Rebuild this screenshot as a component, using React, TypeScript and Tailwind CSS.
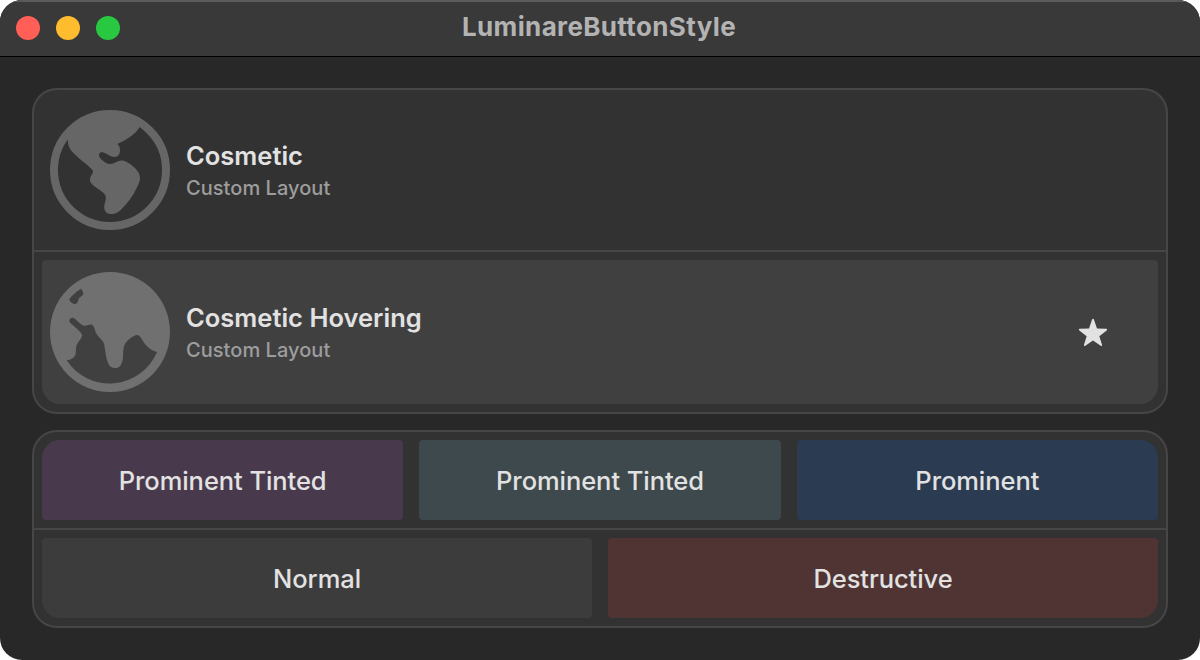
import type { ReactNode } from "react";

function GlobeAmericas() {
  return (
    <svg viewBox="30 30 360 360" className="size-[120px] shrink-0 text-[#666666]" fill="currentColor">
      <circle cx="210" cy="210" r="168" fill="none" stroke="currentColor" strokeWidth="24" />
      <path d="M83 118C84 134 87 145 98 157C114 175 137 190 154 206C160 212 160 215 157 221C150 232 147 240 154 250C163 262 186 272 195 284C203 296 190 313 193 326C196 338 205 342 215 342C233 342 243 329 257 314C274 295 288 272 298 246C302 235 300 224 294 215C285 202 269 189 253 183C235 177 227 192 210 192C198 192 179 176 177 167C175 159 182 155 192 158C202 161 212 171 222 171C234 171 240 162 240 152C240 143 238 136 232 132C256 122 287 104 298 82L312 70L210 32L105 68L70 120Z" />
    </svg>
  );
}

function GlobeAfrica() {
  return (
    <svg viewBox="30 30 360 360" className="size-[120px] shrink-0 text-[#707070]" fill="currentColor">
      <path
        fillRule="evenodd"
        d="M210 30A180 180 0 1 1 210 390A180 180 0 1 1 210 30ZM80 295C93 293 104 287 107 275C109 266 106 254 112 245C117 237 127 227 126 219C125 210 101 193 91 183C86 177 88 168 97 167C107 167 119 188 132 191C141 193 151 185 157 189C164 194 164 207 170 217C176 227 188 234 192 245C196 260 196 282 204 302C208 313 215 318 226 318C239 318 245 308 248 293C251 280 247 262 254 248C261 235 280 220 291 219C303 219 305 235 317 248C326 259 339 267 351 270A154 154 0 0 1 80 295ZM123 80C126 83 130 90 130 95C128 101 119 105 116 110C115 117 112 125 105 126C97 126 89 119 88 111C95 101 107 90 123 80Z"
      />
    </svg>
  );
}

function Star() {
  return (
    <svg viewBox="0 0 90 86" className="h-[29px] w-[30px]" fill="#e2e2e2">
      <path d="M45 2Q47 2 48 5L57 31L85 32Q90 33 86 37L64 54L72 80Q73 85 68 83L45 67L22 83Q17 85 18 80L26 54L4 37Q0 33 5 32L33 31L42 5Q43 2 45 2Z" />
    </svg>
  );
}

function Group({ children }: { children: ReactNode }) {
  return (
    <section className="divide-y-2 divide-[#464646] rounded-[25px] border-2 border-[#464646] bg-[#323232]">
      {children}
    </section>
  );
}

function Label({ title }: { title: string }) {
  return (
    <div className="flex flex-col pt-[3px]">
      <span className="text-[25.5px] leading-8 font-semibold tracking-[0.01px] text-[#e2e2e2]">{title}</span>
      <span className="text-[20px] leading-8 font-medium tracking-[0.05px] text-[#9d9d9d]">Custom Layout</span>
    </div>
  );
}

function Action({ className, children }: { className: string; children: ReactNode }) {
  return (
    <button
      className={`flex h-20 flex-1 items-center justify-center rounded-[4px] pt-[3px] text-[25.5px] font-[450] tracking-[-0.07px] text-[#e2e2e2] ${className}`}
    >
      {children}
    </button>
  );
}

export default function App() {
  return (
    <div className="h-[660px] w-[1200px] bg-white font-['Inter',sans-serif]">
      <main className="h-full overflow-hidden rounded-[22px] bg-[#282828]">
        <header className="grid h-[57px] grid-cols-[1fr_auto_1fr] items-center border-t-2 border-b border-t-[#5b5b5b] border-b-black bg-[#393939]">
          <div className="flex gap-4 pb-[2px] pl-4">
            <i className="size-6 rounded-full bg-[#ff5f57]" />
            <i className="size-6 rounded-full bg-[#febc2e]" />
            <i className="size-6 rounded-full bg-[#28c840]" />
          </div>
          <h1 className="pr-[2px] pb-[6px] text-[26px] font-bold tracking-[0.36px] text-[#b3b3b3]">LuminareButtonStyle</h1>
        </header>
        <div className="flex flex-col gap-4 px-8 pt-[31px]">
          <Group>
            <div className="flex h-[162px] items-center gap-4 px-4">
              <GlobeAmericas />
              <Label title="Cosmetic" />
            </div>
            <div className="p-2">
              <div className="flex h-36 items-center gap-4 rounded-[4px] rounded-b-[18px] bg-[#404040] pr-[50px] pl-2">
                <GlobeAfrica />
                <Label title="Cosmetic Hovering" />
                <div className="ml-auto pt-[1px]">
                  <Star />
                </div>
              </div>
            </div>
          </Group>
          <Group>
            <div className="flex gap-4 p-2">
              <Action className="rounded-tl-[18px] bg-[#49394d]">Prominent Tinted</Action>
              <Action className="bg-[#3d494c]">Prominent Tinted</Action>
              <Action className="rounded-tr-[18px] bg-[#2b3c52]">Prominent</Action>
            </div>
            <div className="flex gap-4 p-2">
              <Action className="rounded-bl-[18px] bg-[#3c3c3c]">Normal</Action>
              <Action className="rounded-br-[18px] bg-[#503434]">Destructive</Action>
            </div>
          </Group>
        </div>
      </main>
    </div>
  );
}
